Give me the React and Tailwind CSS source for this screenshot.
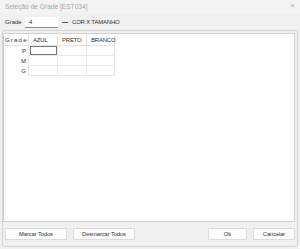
import React from "react";

export default function App() {
  const font = { fontFamily: '"Liberation Sans", Arial, sans-serif' };
  const rows = ["P", "M", "G"];
  const cols = ["AZUL", "PRETO", "BRANCO"];
  return (
    <div className="w-[300px] h-[249px] bg-[#f0f0f0] flex flex-col text-[6px] text-[#333]" style={font}>
      {/* title */}
      <div className="h-[14px] flex items-center justify-between pl-[5px] pr-[5px] bg-[#f3f3f3]">
        <span className="text-[#a8a8a8] text-[6.6px]">Seleção de Grade [EST034]</span>
        <span className="text-[#b0b0b0] text-[8px] leading-none mb-[3px]">×</span>
      </div>
      {/* top row */}
      <div className="h-[16px] flex items-center pl-[5px] pt-[1px]">
        <span className="w-[20px]">Grade</span>
        <div className="w-[33px] h-[11px] bg-white border-b border-[#8a8a8a] flex items-center pl-[4px]">4</div>
        <div className="ml-[4px] w-[6px] h-[1px] bg-[#555]"></div>
        <span className="ml-[4px] tracking-[-0.2px]">COR X TAMANHO</span>
      </div>
      {/* frame */}
      <div className="flex-1 mx-[2px] mb-[2px] border border-[#d4d4d4] rounded-[3px] flex flex-col">
        <div className="flex-1 mt-[2px] mr-[2px] bg-white border border-[#d0d0d0] pt-[1px]">
          <div className="flex h-[11px] items-center">
            <div className="w-[24px] h-full flex items-center tracking-[1.2px] pl-[1px] border-b border-[#e4e4e4]">Grade</div>
            {cols.map((c, j) => (
              <div key={c} className={"w-[29px] h-full flex items-center pl-[4px] border-l border-b border-[#e4e4e4] tracking-[-0.2px]" + (j === 2 ? " border-r" : "")}>{c}</div>
            ))}
          </div>
          {rows.map((r, i) => (
            <div key={r} className="flex h-[10px]">
              <div className="w-[24px] flex items-center justify-end pr-[2px]">{r}</div>
              {cols.map((c, j) => (
                <div key={c} className={"w-[29px] h-full border-l border-b border-[#e8e8e8] flex items-center justify-center" + (j === 2 ? " border-r" : "")}>
                  {i === 0 && j === 0 ? <div className="w-[27px] h-[9px] border border-[#7a7a7a] bg-white"></div> : null}
                </div>
              ))}
            </div>
          ))}
        </div>
        <div className="h-[24px] flex items-center px-[2px] gap-[6px]">
          <button className="w-[62px] h-[12px] bg-[#fdfdfd] border border-[#dcdcdc] text-[5.8px] tracking-[-0.1px]">Marcar Todos</button>
          <button className="w-[62px] h-[12px] bg-[#fdfdfd] border border-[#dcdcdc] text-[5.8px] tracking-[-0.1px]">Desmarcar Todos</button>
          <div className="flex-1"></div>
          <button className="w-[39px] h-[12px] bg-[#fdfdfd] border border-[#dcdcdc] text-[5.8px]">Ok</button>
          <button className="w-[42px] h-[12px] bg-[#fdfdfd] border border-[#dcdcdc] text-[5.8px] tracking-[-0.1px]">Cancelar</button>
        </div>
      </div>
    </div>
  );
}
